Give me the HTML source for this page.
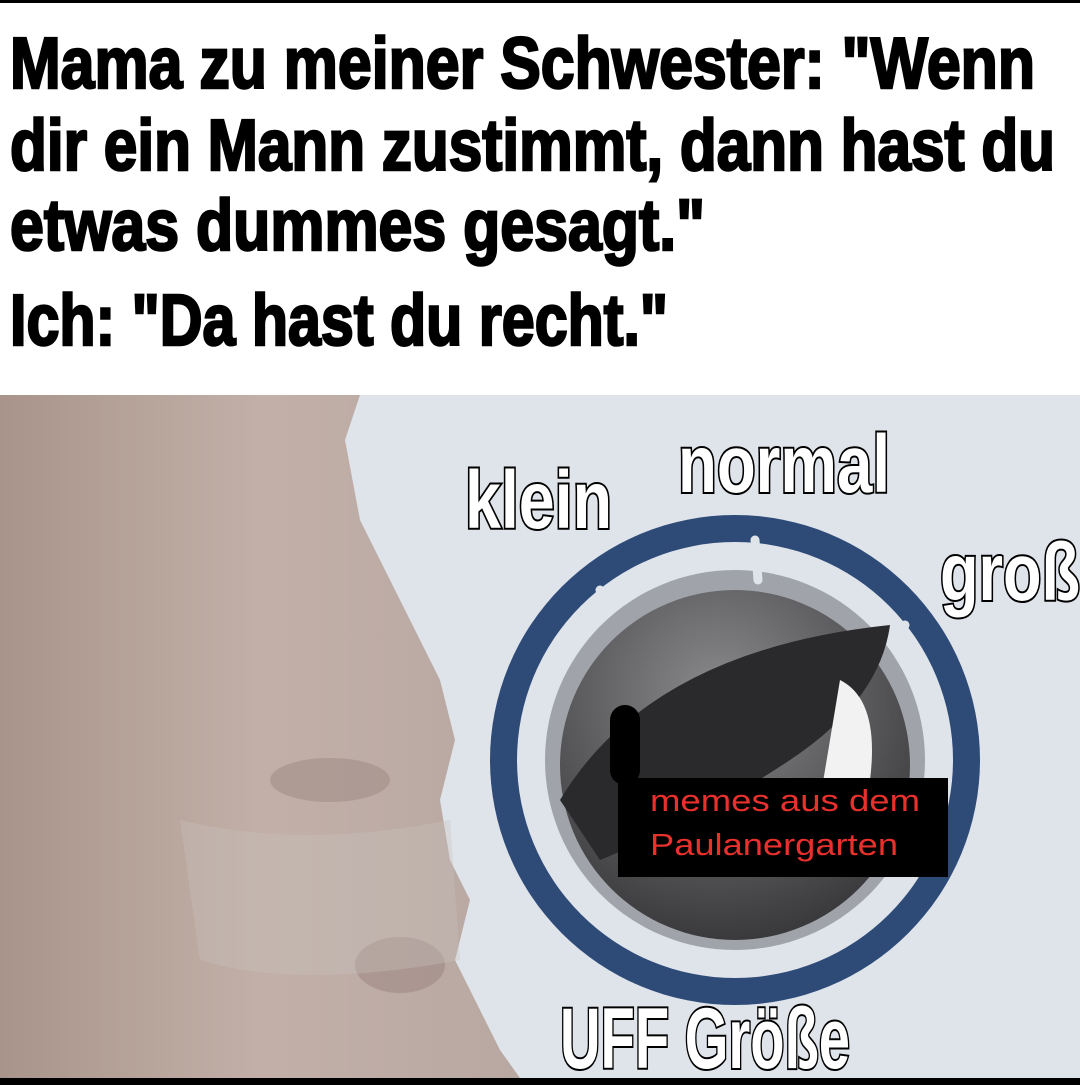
<!DOCTYPE html>
<html><head><meta charset="utf-8"><style>
html,body{margin:0;padding:0;background:#fff;width:1080px;height:1085px;overflow:hidden}
svg{display:block}
.t{font-family:"Liberation Sans",sans-serif;font-weight:bold;fill:#000;stroke:#000;stroke-width:2.5}
.w{font-family:"Liberation Sans",sans-serif;font-weight:bold;fill:#fff;stroke:#000;stroke-width:4;paint-order:stroke}
.r{font-family:"Liberation Sans",sans-serif;fill:#e8302c;font-size:31px}
</style></head><body>
<svg width="1080" height="1085" viewBox="0 0 1080 1085" xmlns="http://www.w3.org/2000/svg">
<defs>
<linearGradient id="sk" x1="0" y1="0" x2="1" y2="0">
<stop offset="0" stop-color="#a8948a"/><stop offset="0.5" stop-color="#c2b0a8"/><stop offset="1" stop-color="#b8a8a2"/>
</linearGradient>
<radialGradient id="kn" cx="0.45" cy="0.3" r="0.7">
<stop offset="0" stop-color="#8a8a8c"/><stop offset="1" stop-color="#3a3a3c"/>
</radialGradient>
</defs>
<rect x="0" y="0" width="1080" height="3" fill="#000"/>
<rect x="0" y="395" width="1080" height="690" fill="#dfe3ea"/>
<path d="M0 395 L360 395 L345 440 L360 520 L400 600 L440 680 L455 740 L440 800 L450 860 L470 900 L455 960 L480 1010 L500 1050 L520 1078 L0 1078 Z" fill="url(#sk)"/>
<ellipse cx="330" cy="780" rx="60" ry="22" fill="#9c8882" opacity="0.5"/>
<ellipse cx="400" cy="965" rx="45" ry="28" fill="#9a827e" opacity="0.5"/>
<path d="M180 820 Q300 850 450 820 L460 960 Q300 990 200 960 Z" fill="#c8c2bc" opacity="0.35"/>
<circle cx="735" cy="760" r="245" fill="#2e4b78"/>
<circle cx="735" cy="760" r="218" fill="#dfe3ea"/>
<circle cx="735" cy="760" r="190" fill="#a0a4aa"/>
<circle cx="735" cy="765" r="175" fill="url(#kn)"/>
<path d="M560 800 Q650 650 890 625 Q880 700 790 760 Q700 820 600 860 Z" fill="#2a2a2c"/>
<path d="M840 680 Q880 700 870 780 L820 800 Z" fill="#f2f2f2"/>
<path d="M600 590 L610 610 M755 540 L758 580 M905 625 L895 645" stroke="#dfe3ea" stroke-width="9" stroke-linecap="round"/>
<rect x="618" y="778" width="330" height="99" fill="#000"/>
<rect x="610" y="705" width="30" height="80" rx="15" fill="#000"/>
<text class="r" x="650" y="811" textLength="270" lengthAdjust="spacingAndGlyphs">memes aus dem</text>
<text class="r" x="650" y="855" textLength="248" lengthAdjust="spacingAndGlyphs">Paulanergarten</text>
<text class="w" x="465" y="528" font-size="82" textLength="147" lengthAdjust="spacingAndGlyphs">klein</text>
<text class="w" x="678" y="492" font-size="82" textLength="212" lengthAdjust="spacingAndGlyphs">normal</text>
<text class="w" x="940" y="600" font-size="82" textLength="140" lengthAdjust="spacingAndGlyphs">groß</text>
<text class="w" x="560" y="1068" font-size="86" textLength="290" lengthAdjust="spacingAndGlyphs">UFF Größe</text>
<rect x="0" y="1078" width="1080" height="7" fill="#000"/>
<text class="t" x="10" y="88" font-size="72" textLength="1025" lengthAdjust="spacingAndGlyphs">Mama zu meiner Schwester: "Wenn</text>
<text class="t" x="10" y="170" font-size="72" textLength="1045" lengthAdjust="spacingAndGlyphs">dir ein Mann zustimmt, dann hast du</text>
<text class="t" x="10" y="250" font-size="72" textLength="695" lengthAdjust="spacingAndGlyphs">etwas dummes gesagt."</text>
<text class="t" x="10" y="345" font-size="72" textLength="658" lengthAdjust="spacingAndGlyphs">Ich: "Da hast du recht."</text>
</svg>
</body></html>
